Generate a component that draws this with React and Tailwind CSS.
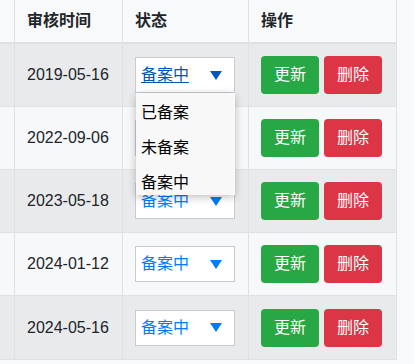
export default function App() {
  const rows = [
    { date: "2019-05-16", stripe: true, open: true },
    { date: "2022-09-06", stripe: false },
    { date: "2023-05-18", stripe: true },
    { date: "2024-01-12", stripe: false },
    { date: "2024-05-16", stripe: true },
  ];
  const font = { fontFamily: '"Segoe UI", "Liberation Sans", "Noto Sans CJK SC", sans-serif' };
  return (
    <div className="w-[414px] h-[364px] bg-[#f8f9fa] text-[#212529] text-[16px] relative overflow-hidden" style={font}>
      <div className="w-[397px] border-b border-[#dee2e6]">
        <div className="flex h-[44px] bg-[#f8f9fa] border-b-2 border-[#dee2e6] font-bold">
          <div className="w-[15px] border-r border-[#dee2e6]"></div>
          <div className="w-[108px] border-r border-[#dee2e6] pl-[12px] flex items-center">审核时间</div>
          <div className="w-[126px] border-r border-[#dee2e6] pl-[12px] flex items-center">状态</div>
          <div className="w-[148px] border-r border-[#dee2e6] pl-[12px] flex items-center">操作</div>
        </div>
        {rows.map((r, i) => (
          <div
            key={i}
            className={`flex h-[63px] ${i < rows.length - 1 ? "border-b" : ""} border-[#dee2e6] ${r.stripe ? "bg-[#e9eaec]" : "bg-[#f7f8fa]"}`}
          >
            <div className="w-[15px] border-r border-[#dee2e6]"></div>
            <div className="w-[108px] border-r border-[#dee2e6] pl-[12px] flex items-center">{r.date}</div>
            <div className="w-[126px] border-r border-[#dee2e6] pl-[12px] flex items-center relative">
              <div className="w-[100px] h-[36px] bg-white border border-[#c8ccd0] flex items-center justify-between pl-[5px] pr-[12px]">
                <span className={r.open ? "text-[#0056b3] underline underline-offset-2" : "text-[#007bff]"}>备案中</span>
                <svg width="12" height="9" viewBox="0 0 12 9">
                  <polygon points="0,0 12,0 6,9" fill={r.open ? "#0058c0" : "#007bff"} />
                </svg>
              </div>
              {r.open && (
                <div className="absolute left-[13px] top-[49px] z-10 w-[99px] h-[102px] bg-[#f8f8f8] shadow-[0_2px_8px_rgba(0,0,0,0.25)] flex flex-col pt-[2px] overflow-hidden">
                  <div className="h-[35px] shrink-0 pl-[5px] flex items-center text-black">已备案</div>
                  <div className="h-[35px] shrink-0 pl-[5px] flex items-center text-black">未备案</div>
                  <div className="h-[35px] shrink-0 pl-[5px] flex items-center text-black">备案中</div>
                </div>
              )}
            </div>
            <div className="w-[148px] border-r border-[#dee2e6] pl-[12px] flex items-center gap-[5px]">
              <button className="w-[58px] h-[38px] rounded-[4px] bg-[#28a745] text-white">更新</button>
              <button className="w-[58px] h-[38px] rounded-[4px] bg-[#dc3545] text-white">删除</button>
            </div>
          </div>
        ))}
      </div>
    </div>
  );
}
